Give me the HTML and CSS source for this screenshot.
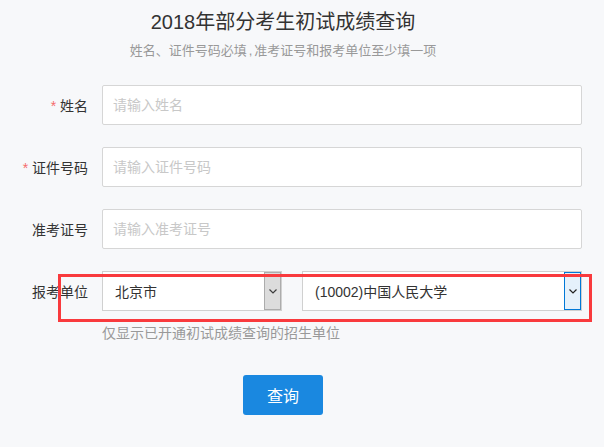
FILE: index.html
```html
<!DOCTYPE html>
<html lang="zh">
<head>
<meta charset="utf-8">
<title>2018年部分考生初试成绩查询</title>
<link rel="stylesheet" href="styles.css">
</head>
<body>
<div class="page">
  <h1 class="title">2018年部分考生初试成绩查询</h1>
  <p class="sub">姓名、证件号码必填<span class="comma">,</span>准考证号和报考单位至少填一项</p>
  <div class="form">
    <div class="row">
      <label class="label"><span class="req">*</span> 姓名</label>
      <input class="input" type="text" placeholder="请输入姓名">
    </div>
    <div class="row">
      <label class="label"><span class="req">*</span> 证件号码</label>
      <input class="input" type="text" placeholder="请输入证件号码">
    </div>
    <div class="row">
      <label class="label">准考证号</label>
      <input class="input" type="text" placeholder="请输入准考证号">
    </div>
    <div class="row row-select">
      <label class="label">报考单位</label>
      <div class="select sel-prov">
        <span class="sel-text">北京市</span>
        <span class="sel-btn">
          <svg width="8" height="5" viewBox="0 0 8 5"><polyline points="0.5,0.5 4,4 7.5,0.5" fill="none" stroke="#3c3c3c" stroke-width="1.2"/></svg>
        </span>
      </div>
      <div class="select sel-unit">
        <span class="sel-text">(10002)中国人民大学</span>
        <span class="sel-btn sel-btn-focus">
          <svg width="8" height="5" viewBox="0 0 8 5"><polyline points="0.5,0.5 4,4 7.5,0.5" fill="none" stroke="#222" stroke-width="1.2"/></svg>
        </span>
      </div>
      <div class="mark"></div>
    </div>
    <p class="hint">仅显示已开通初试成绩查询的招生单位</p>
    <div class="actions">
      <button class="btn" type="button">查询</button>
    </div>
  </div>
</div>
</body>
</html>
```
FILE: styles.css
```css
* { box-sizing: border-box; }
html, body {
  margin: 0;
  padding: 0;
  background: #f7f8fa;
}
body {
  font-family: "Liberation Sans", "Noto Sans CJK SC", sans-serif;
  color: #333;
}
.page {
  width: 566px;
}
.title {
  margin: 0;
  padding-top: 10px;
  font-size: 20px;
  line-height: 24px;
  font-weight: normal;
  text-align: center;
  color: #333;
}
.sub {
  margin: 8px 0 0;
  font-size: 13px;
  line-height: 18px;
  text-align: center;
  color: #999;
}
.comma {
  padding: 0 2px;
}
.form {
  margin-top: 25px;
}
.row {
  display: flex;
  align-items: center;
  height: 40px;
  margin-bottom: 22px;
  width: 604px;
}
.label {
  width: 102px;
  flex: none;
  padding-right: 14px;
  text-align: right;
  font-size: 14px;
  color: #333;
}
.req {
  color: #f56c6c;
}
.input {
  width: 480px;
  height: 40px;
  border: 1px solid #d6d6d6;
  border-radius: 2px;
  background: #fff;
  padding: 0 10px;
  font-family: "Liberation Sans", "Noto Sans CJK SC", sans-serif;
  font-size: 14px;
  color: #333;
  outline: none;
}
.input::placeholder {
  color: #c8c8c8;
}
.row-select {
  position: relative;
  margin-bottom: 12px;
}
.select {
  display: flex;
  align-items: stretch;
  height: 40px;
  border: 1px solid #d0d0d0;
  background: #fff;
  font-size: 14px;
  color: #333;
}
.sel-prov {
  width: 180px;
}
.sel-unit {
  width: 280px;
  margin-left: 20px;
}
.sel-text {
  flex: 1;
  display: flex;
  align-items: center;
  padding-left: 12px;
}
.sel-btn {
  width: 17px;
  flex: none;
  display: flex;
  align-items: center;
  justify-content: center;
  background: #dcdcdc;
  border: 1px solid #acacac;
}
.sel-btn-focus {
  background: #e5f1fb;
  border-color: #0078d7;
}
.mark {
  position: absolute;
  left: 58px;
  top: 3px;
  width: 534px;
  height: 48px;
  border: 3px solid #f93a3d;
  pointer-events: none;
}
.hint {
  margin: 0;
  padding-left: 102px;
  font-size: 14px;
  line-height: 20px;
  color: #999;
}
.actions {
  display: flex;
  justify-content: center;
  margin-top: 32px;
}
.btn {
  width: 80px;
  height: 40px;
  border: none;
  border-radius: 3px;
  background: #1a88e0;
  color: #fff;
  font-family: "Liberation Sans", "Noto Sans CJK SC", sans-serif;
  font-size: 16px;
  cursor: pointer;
}
```
